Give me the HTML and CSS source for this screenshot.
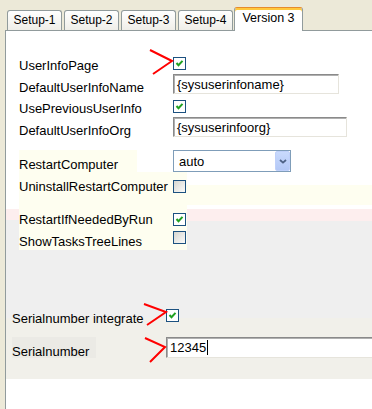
FILE: index.html
```html
<!DOCTYPE html>
<html lang="en">
<head>
  <meta charset="UTF-8">
  <title>Setup - Version 3</title>
  <link rel="stylesheet" href="styles.css">
</head>
<body>
  <nav class="tabs">
    <div class="tab">Setup-1</div>
    <div class="tab">Setup-2</div>
    <div class="tab">Setup-3</div>
    <div class="tab">Setup-4</div>
    <div class="tab active">Version 3</div>
  </nav>

  <section class="panel">
    <div class="props">
      <span class="lbl">UserInfoPage</span>
      <span class="box"><svg width="11" height="11" viewBox="0 0 11 11"><path d="M2.5 5l2 2.2 4-4.4" /></svg></span>

      <span class="lbl txt">DefaultUserInfoName</span>
      <span class="field name">{sysuserinfoname}</span>

      <span class="lbl">UsePreviousUserInfo</span>
      <span class="box"><svg width="11" height="11" viewBox="0 0 11 11"><path d="M2.5 5l2 2.2 4-4.4" /></svg></span>

      <span class="lbl txt">DefaultUserInfoOrg</span>
      <span class="field org">{sysuserinfoorg}</span>

      <span class="lbl sel">RestartComputer</span>
      <span class="select">auto
        <span class="drop"><svg width="8" height="5" viewBox="0 0 8 5"><path d="M1 1l3 2.6L7 1" /></svg></span>
      </span>
    </div>

    <div class="group">
      <div class="gutter"></div>
      <div class="main">
        <span class="lbl">UninstallRestartComputer</span>
        <span class="box off"></span>

        <span class="lbl">RestartIfNeededByRun</span>
        <span class="box"><svg width="11" height="11" viewBox="0 0 11 11"><path d="M2.5 5l2 2.2 4-4.4" /></svg></span>

        <span class="lbl low">ShowTasksTreeLines</span>
        <span class="box off"></span>
      </div>
      <div class="fill"></div>
    </div>

    <div class="serial">
      <span class="lbl">Serialnumber integrate</span>
      <span class="box"><svg width="11" height="11" viewBox="0 0 11 11"><path d="M2.5 5l2 2.2 4-4.4" /></svg></span>

      <span class="lbl block">Serialnumber</span>
      <span class="field sn">12345<span class="caret"></span></span>
    </div>
  </section>

  <!-- red hand drawn markers -->
  <svg class="marks" width="372" height="409" viewBox="0 0 372 409">
    <polyline points="150,50 172,61 153,74" />
    <polyline points="144,304 166,312 147,325" />
    <polyline points="145,338 165,347 150,362" />
  </svg>
</body>
</html>
```

FILE: styles.css
```css
:root {
  --xp-bg: #ece9d8;
  --tab-border: #919b9c;
  --yellow: #fefef0;
  --pink: #fdeeee;
  --gray: #efefef;
  --lower: #f1f0ea;
  --check: #21a121;
  --box-border: #1c5180;
}
* { box-sizing:border-box; }
html, body { margin:0; height:100%; }
body {
  background:var(--xp-bg);
  font-family:"Liberation Sans", Arial, sans-serif;
  font-size:13px;
  color:#000;
  overflow:hidden;
  position:relative;
}

/* tabs */
.tabs {
  display:flex; align-items:flex-end;
  height:30px; padding-left:7px;
}
.tab {
  width:55px; height:20px; margin-right:2px;
  border:1px solid var(--tab-border); border-bottom:none;
  border-radius:3px 3px 0 0;
  background:linear-gradient(#ffffff, #efeee8);
  font-size:12px; line-height:19px; text-align:center;
}
.tab.active {
  width:69px; height:24px;
  margin:0 0 -1px -1px;
  position:relative; z-index:1;
  background:#fff;
  border-top-color:#e68b2c;
  box-shadow:inset 0 2px 0 #ffc83c;
  font-size:12.5px; line-height:21px;
}

/* panel */
.panel {
  height:379px;
  margin-left:5px;
  overflow:hidden;
  border-top:1px solid var(--tab-border);
  border-left:1px solid var(--tab-border);
  background:#fff;
}
.lbl { line-height:15px; white-space:nowrap; padding-top:1px; }
.lbl.txt { padding-top:6px; }
.lbl.sel {
  width:118px; height:22px; padding-top:7px;
  background:var(--yellow);
}
.lbl.low { padding-top:3px; }
.lbl.block {
  width:84px; height:21px; padding-top:7px;
  background:#ebeae5;
}

.props {
  display:grid;
  grid-template-columns:154px 1fr;
  grid-template-rows:17px 26px 17px 33px 22px;
  align-items:start;
  padding:26px 0 0 13px;
}

/* xp checkbox */
.box {
  display:flex; align-items:center; justify-content:center;
  width:13px; height:13px;
  border:1px solid var(--box-border);
  background:#fff;
}
.box.off { background:linear-gradient(135deg, #d6d6d0, #fbfbfa); }
.box svg path { fill:none; stroke:var(--check); stroke-width:2; }

/* sunken text field */
.field {
  display:block; height:20px;
  padding:1px 0 0 3px; line-height:18px;
  background:#fff;
  border:1px solid; border-color:#8a8a8a #e6e4dc #e6e4dc #8a8a8a;
  box-shadow:inset 1px 1px 0 #b0b0b0;
  white-space:nowrap;
}
.field.name { width:166px; }
.field.org { width:174px; }
.field.sn { height:21px; width:calc(100% + 6px); }
.caret {
  display:inline-block; width:1px; height:15px;
  background:#000; vertical-align:-3px; margin-left:1px;
}

.select {
  display:flex; align-items:center; justify-content:space-between;
  width:118px; height:22px;
  padding-left:5px;
  border:1px solid #7f9db9;
  background:#fff;
}
.select .drop {
  display:flex; align-items:center; justify-content:center;
  width:15px; height:20px;
  background:linear-gradient(#c9dafd, #b3c8f6);
  border:1px solid #bfd0fa; border-radius:2px;
}
.drop svg path { fill:none; stroke:#4d6185; stroke-width:1.8; }

/* restart group with the coloured bands */
.group { display:flex; height:128px; }
.gutter {
  width:13px;
  background:linear-gradient(#fff 37px, var(--pink) 37px 48px, var(--gray) 48px);
}
.main {
  display:grid;
  grid-template-columns:154px 14px;
  grid-template-rows:33px 19px 18px;
  align-items:start;
  padding-top:7px;
  background:linear-gradient(var(--yellow) 78px, var(--gray) 78px);
}
.main .box { margin-top:1px; }
.main .lbl { padding-top:0; }
.main .lbl.low { padding-top:3px; }
.main .box:last-child { margin-top:0; }
.fill {
  flex:1;
  background:linear-gradient(#fff 13px, var(--yellow) 13px 33px, #fff 33px 37px,
    var(--pink) 37px 49px, var(--gray) 49px);
}

/* serial number */
.serial {
  display:grid;
  grid-template-columns:154px 1fr;
  grid-template-rows:28px 21px;
  align-items:start;
  height:79px;
  padding:9px 0 0 6px;
  background:linear-gradient(var(--gray) 18px, var(--lower) 18px);
}
.serial .lbl { padding-top:2px; }
.serial .lbl.block { padding-top:7px; }

.marks { position:absolute; left:0; top:0; pointer-events:none; }
.marks polyline { fill:none; stroke:#f00; stroke-width:2; }
```
